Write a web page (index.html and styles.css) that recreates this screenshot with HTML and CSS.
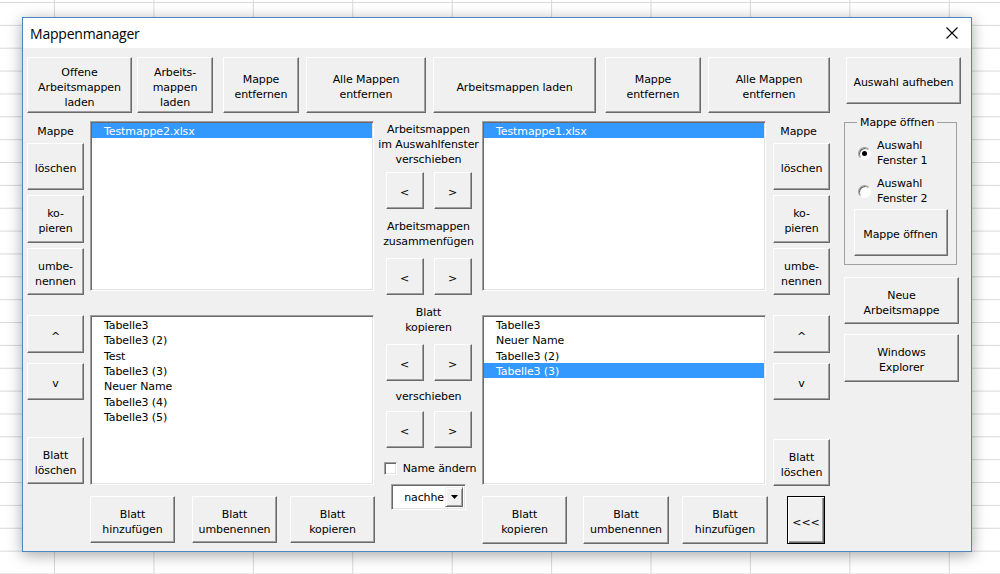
FILE: index.html
```html
<!DOCTYPE html>
<html lang="de">
<head>
<meta charset="utf-8">
<title>Mappenmanager</title>
<link rel="stylesheet" href="styles.css">
</head>
<body>
<div class="dialog">
  <div class="titlebar">
    <span class="title">Mappenmanager</span>
    <svg class="close" width="12" height="12" viewBox="0 0 12 12"><path d="M0.5 0.5L11.5 11.5M11.5 0.5L0.5 11.5" stroke="#000" stroke-width="1.1" fill="none"/></svg>
  </div>
  <div class="client">
    <div class="main">
      <div class="toprow">
        <div class="btn w105">Offene<br>Arbeitsmappen<br>laden</div>
        <div class="btn w76 ml5">Arbeits-<br>mappen<br>laden</div>
        <div class="btn w76 ml10">Mappe<br>entfernen</div>
        <div class="btn w120 ml7">Alle Mappen<br>entfernen</div>
        <div class="btn w163 ml7">Arbeitsmappen laden</div>
        <div class="btn w96 ml9">Mappe<br>entfernen</div>
        <div class="btn w122 ml7">Alle Mappen<br>entfernen</div>
      </div>
      <div class="panes">
        <div class="side">
          <div class="side-label">Mappe</div>
          <div class="btn sb-del">löschen</div>
          <div class="btn sb-copy">ko-<br>pieren</div>
          <div class="btn sb-ren">umbe-<br>nennen</div>
          <div class="btn sb-up">^</div>
          <div class="btn sb-down">v</div>
          <div class="btn sb-sheetdel">Blatt<br>löschen</div>
        </div>
        <div class="pane">
          <div class="list">
            <div class="item sel">Testmappe2.xlsx</div>
          </div>
          <div class="list list-low">
            <div class="item">Tabelle3</div>
            <div class="item">Tabelle3 (2)</div>
            <div class="item">Test</div>
            <div class="item">Tabelle3 (3)</div>
            <div class="item">Neuer Name</div>
            <div class="item">Tabelle3 (4)</div>
            <div class="item">Tabelle3 (5)</div>
          </div>
          <div class="pane-buttons">
            <div class="btn pb">Blatt<br>hinzufügen</div>
            <div class="btn pb pb-2">Blatt<br>umbenennen</div>
            <div class="btn pb pb-3">Blatt<br>kopieren</div>
          </div>
        </div>
        <div class="middle">
          <div class="mtext mt-a">Arbeitsmappen<br>im Auswahlfenster<br>verschieben</div>
          <div class="arrows ar-a">
            <div class="btn arrow">&lt;</div>
            <div class="btn arrow">&gt;</div>
          </div>
          <div class="mtext mt-b">Arbeitsmappen<br>zusammenfügen</div>
          <div class="arrows ar-b">
            <div class="btn arrow">&lt;</div>
            <div class="btn arrow">&gt;</div>
          </div>
          <div class="mtext mt-c">Blatt<br>kopieren</div>
          <div class="arrows ar-c">
            <div class="btn arrow">&lt;</div>
            <div class="btn arrow">&gt;</div>
          </div>
          <div class="mtext mt-d">verschieben</div>
          <div class="arrows ar-d">
            <div class="btn arrow">&lt;</div>
            <div class="btn arrow">&gt;</div>
          </div>
          <div class="checkrow">
            <span class="check"></span>
            <span>Name ändern</span>
          </div>
          <div class="combo">
            <span class="combo-text">nachhe</span>
            <span class="combo-btn"><svg width="7" height="4" viewBox="0 0 7 4"><path d="M0 0H7L3.5 4Z" fill="#000"/></svg></span>
          </div>
        </div>
        <div class="pane pane-right">
          <div class="list">
            <div class="item sel">Testmappe1.xlsx</div>
          </div>
          <div class="list list-low">
            <div class="item">Tabelle3</div>
            <div class="item">Neuer Name</div>
            <div class="item">Tabelle3 (2)</div>
            <div class="item sel">Tabelle3 (3)</div>
          </div>
          <div class="pane-buttons">
            <div class="btn pb">Blatt<br>kopieren</div>
            <div class="btn pb pb-2">Blatt<br>umbenennen</div>
            <div class="btn pb pb-3">Blatt<br>hinzufügen</div>
          </div>
        </div>
        <div class="side side-right">
          <div class="side-label">Mappe</div>
          <div class="btn sb-del">löschen</div>
          <div class="btn sb-copy">ko-<br>pieren</div>
          <div class="btn sb-ren">umbe-<br>nennen</div>
          <div class="btn sb-up">^</div>
          <div class="btn sb-down">v</div>
          <div class="btn sb-sheetdel">Blatt<br>löschen</div>
          <div class="btn default back">&lt;&lt;&lt;</div>
        </div>
      </div>
    </div>
    <div class="rightcol">
      <div class="btn rb-clear">Auswahl aufheben</div>
      <fieldset class="frame">
        <legend>Mappe öffnen</legend>
        <div class="frame-body">
          <div class="radio-row">
            <span class="radio"><span class="dot"></span></span>
            <span>Auswahl<br>Fenster 1</span>
          </div>
          <div class="radio-row">
            <span class="radio"></span>
            <span>Auswahl<br>Fenster 2</span>
          </div>
          <div class="btn rb-open">Mappe öffnen</div>
        </div>
      </fieldset>
      <div class="btn rb-new">Neue<br>Arbeitsmappe</div>
      <div class="btn rb-explorer">Windows<br>Explorer</div>
    </div>
  </div>
</div>
</body>
</html>
```

FILE: styles.css
```css
* { box-sizing: border-box; }
html, body { margin: 0; }
body {
  width: 1000px;
  height: 574px;
  overflow: hidden;
  padding: 17px 0 0 22px;
  background-color: #fff;
  background-image:
    linear-gradient(to right, #d9d9d9 1px, transparent 1px),
    linear-gradient(to bottom, #d9d9d9 1px, transparent 1px);
  background-size: 99.43px 22.86px;
  background-position: 54px 2px;
  font-family: "DejaVu Sans", sans-serif;
  font-size: 11px;
  letter-spacing: -0.1px;
  color: #000;
}
.dialog {
  width: 950px;
  height: 535px;
  border: 1px solid #4a87c4;
  background: #f0f0f0;
  box-shadow: 0 3px 14px rgba(0, 0, 0, 0.35);
  display: flex;
  flex-direction: column;
}
.titlebar {
  height: 30px;
  flex: none;
  background: #fff;
  display: flex;
  align-items: center;
  justify-content: space-between;
  padding: 0 13px 0 7px;
}
.title {
  font-family: "Open Sans", sans-serif;
  font-size: 14px;
  letter-spacing: -0.2px;
}
.close { display: block; }
.client {
  display: flex;
  gap: 14px;
  padding: 9px 0 0 4px;
}
.main {
  width: 803px;
  display: flex;
  flex-direction: column;
}

/* buttons */
.btn {
  display: flex;
  align-items: center;
  justify-content: center;
  text-align: center;
  flex: none;
  background: #f0f0f0;
  border: 1px solid;
  border-color: #fff #696969 #696969 #fff;
  box-shadow: inset -1px -1px 0 #a0a0a0;
  line-height: 15px;
  padding-top: 4px;
  white-space: nowrap;
}
.btn.default {
  border-color: #000;
  box-shadow: inset 1px 1px 0 #fff, inset -1px -1px 0 #696969, inset -2px -2px 0 #a0a0a0;
}

/* top row */
.toprow { display: flex; height: 56px; }
.w105 { width: 105px; }
.w76 { width: 76px; }
.w120 { width: 120px; }
.w163 { width: 163px; }
.w96 { width: 96px; }
.w122 { width: 122px; }
.ml5 { margin-left: 5px; }
.ml7 { margin-left: 7px; }
.ml9 { margin-left: 9px; }
.ml10 { margin-left: 10px; }

.panes {
  display: flex;
  margin-top: 8px;
}

/* side button columns */
.side {
  width: 57px;
  display: flex;
  flex-direction: column;
  margin-right: 6px;
}
.side-right {
  margin-right: 0;
  margin-left: 5px;
}
.side-label {
  height: 22px;
  padding-top: 3px;
  line-height: 15px;
  text-align: center;
}
.side-right .side-label { padding-right: 6px; }
.sb-del { height: 47px; }
.sb-copy { margin-top: 5px; height: 48px; }
.sb-ren { margin-top: 5px; height: 47px; }
.sb-up { margin-top: 20px; height: 38px; }
.sb-down { margin-top: 10px; height: 37px; }
.sb-sheetdel { margin-top: 37px; height: 47px; }
.side-right .sb-sheetdel { margin-top: 39px; }
.back {
  margin: 10px 0 0 14px;
  width: 38px;
  height: 48px;
}

/* list panes */
.pane {
  width: 285px;
  display: flex;
  flex-direction: column;
}
.pane-right { width: 286px; }
.list {
  width: 284px;
  height: 170px;
  background: #fff;
  border: 1px solid;
  border-color: #a0a0a0 #fff #fff #a0a0a0;
  box-shadow: inset 1px 1px 0 #696969, inset -1px -1px 0 #e3e3e3;
  padding: 1px;
}
.list-low { margin-top: 24px; }
.item {
  height: 15.33px;
  line-height: 15.33px;
  padding: 1px 0 0 12px;
  white-space: nowrap;
}
.item.sel {
  background: #3399ff;
  color: #fff;
}
.pane-buttons {
  display: flex;
  margin-top: 11px;
  height: 47px;
}
.pane-right .pane-buttons { height: 48px; }
.pb { width: 85px; }
.pb-2 { margin-left: 17px; }
.pb-3 { margin-left: 13px; }
.pane-right .pb-2 { margin-left: 16px; width: 86px; }
.pane-right .pb-3 { margin-left: 13px; width: 86px; }

/* middle column */
.middle {
  width: 107px;
  display: flex;
  flex-direction: column;
  align-items: center;
  padding-top: 1px;
}
.mtext {
  line-height: 15px;
  text-align: center;
  white-space: nowrap;
}
.arrows {
  display: flex;
  gap: 10px;
}
.arrow {
  width: 38px;
  height: 37px;
}
.ar-a { margin-top: 5px; }
.mt-b { margin-top: 10px; }
.ar-b { margin-top: 9px; }
.mt-c { margin-top: 10px; }
.ar-c { margin-top: 9px; }
.mt-d { margin-top: 8px; }
.ar-d { margin-top: 7px; }
.checkrow {
  display: flex;
  align-items: center;
  gap: 6px;
  height: 15px;
  margin-top: 13px;
  margin-left: 3px;
  white-space: nowrap;
}
.check {
  width: 13px;
  height: 13px;
  background: #fff;
  border: 1px solid;
  border-color: #a0a0a0 #fff #fff #a0a0a0;
  box-shadow: inset 1px 1px 0 #696969, inset -1px -1px 0 #e3e3e3;
}
.combo {
  margin-top: 8px;
  width: 75px;
  height: 26px;
  display: flex;
  background: #fff;
  border: 1px solid;
  border-color: #a0a0a0 #fff #fff #a0a0a0;
  box-shadow: inset 1px 1px 0 #696969, inset -1px -1px 0 #e3e3e3;
  padding: 2px;
}
.combo-text {
  flex: 1;
  text-align: right;
  padding-right: 1px;
  line-height: 22px;
  overflow: hidden;
  white-space: nowrap;
}
.combo-btn {
  width: 18px;
  display: flex;
  align-items: center;
  justify-content: center;
  background: #f0f0f0;
  border: 1px solid;
  border-color: #f0f0f0 #696969 #696969 #f0f0f0;
  box-shadow: inset 1px 1px 0 #fff, inset -1px -1px 0 #a0a0a0;
}
.combo-btn svg { display: block; }

/* right column */
.rightcol {
  width: 117px;
  display: flex;
  flex-direction: column;
}
.rb-clear {
  margin-left: 2px;
  width: 115px;
  height: 47px;
}
.frame {
  margin: 11px 0 0;
  width: 113px;
  min-width: 0;
  padding: 8px 0 8px 0;
  border: 1px solid #a0a0a0;
}
.frame legend {
  margin-left: 12px;
  padding: 0 3px;
  line-height: 15px;
}
.frame-body {
  display: flex;
  flex-direction: column;
}
.radio-row {
  display: flex;
  align-items: center;
  gap: 6px;
  margin-left: 13px;
  line-height: 15px;
}
.radio-row + .radio-row { margin-top: 8px; }
.radio {
  width: 13px;
  height: 13px;
  border-radius: 50%;
  background: #fff;
  border: 1px solid;
  border-color: #a0a0a0 #fff #fff #a0a0a0;
  box-shadow: inset 1px 1px 0 #696969;
  display: flex;
  align-items: center;
  justify-content: center;
}
.dot {
  width: 5px;
  height: 5px;
  border-radius: 50%;
  background: #000;
}
.rb-open {
  align-self: center;
  width: 94px;
  height: 47px;
  margin-top: 3px;
}
.rb-new {
  margin-top: 12px;
  width: 115px;
  height: 47px;
}
.rb-explorer {
  margin-top: 10px;
  width: 115px;
  height: 48px;
}
```
